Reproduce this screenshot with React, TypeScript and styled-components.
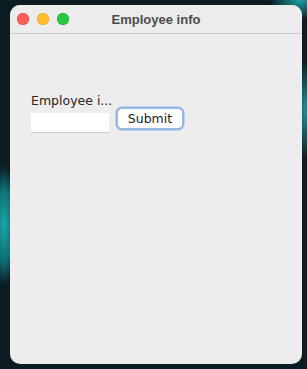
import React from "react";
import styled, { createGlobalStyle } from "styled-components";

const GlobalStyle = createGlobalStyle`
  html, body {
    margin: 0;
    padding: 0;
    width: 307px;
    height: 369px;
    overflow: hidden;
  }
  body {
    background:
      radial-gradient(ellipse 14px 60px at 4px 225px, #1aa7a8 0%, #0d6f76 60%, rgba(10, 30, 36, 0) 100%),
      radial-gradient(ellipse 30px 20px at 300px 0px, #1b9ea3 0%, rgba(10, 30, 36, 0) 100%),
      radial-gradient(ellipse 8px 50px at 305px 110px, #169a9f 0%, rgba(10, 30, 36, 0) 100%),
      #0b1d23;
    font-family: "DejaVu Sans", "Liberation Sans", sans-serif;
  }
`;

const Page = styled.div`
  padding: 5px 5px 5px 10px;
`;

const Window = styled.div`
  width: 292px;
  height: 359px;
  background: #ededed;
  border-radius: 10px;
  display: flex;
  flex-direction: column;
  overflow: hidden;
`;

const TitleBar = styled.div`
  height: 28px;
  flex: none;
  display: flex;
  align-items: center;
  position: relative;
  border-bottom: 1px solid #c9c9c9;
  background: #ececec;
`;

const Lights = styled.div`
  display: flex;
  gap: 8px;
  padding-left: 7px;
`;

const Light = styled.span<{ $color: string; $edge: string }>`
  width: 12px;
  height: 12px;
  border-radius: 50%;
  background: ${(p) => p.$color};
  box-shadow: inset 0 0 0 0.5px ${(p) => p.$edge};
`;

const Title = styled.div`
  position: absolute;
  left: 0;
  right: 0;
  text-align: center;
  font-family: "Liberation Sans", Arial, sans-serif;
  font-weight: bold;
  font-size: 13px;
  color: #4b4b4b;
  pointer-events: none;
`;

const Content = styled.div`
  padding: 59px 21px 0;
  display: flex;
  flex-direction: column;
  align-items: flex-start;
`;

const Label = styled.div`
  font-size: 12.5px;
  color: #262626;
  line-height: 15px;
`;

const Row = styled.div`
  display: flex;
  align-items: flex-start;
  gap: 8px;
  margin-top: 0px;
`;

const Field = styled.input`
  width: 78px;
  height: 20px;
  box-sizing: border-box;
  margin-top: 5px;
  border: none;
  border-bottom: 1px solid #cfcfcf;
  background: #ffffff;
  outline: none;
  padding: 0 4px;
`;

const Button = styled.button`
  height: 21px;
  width: 66px;
  box-sizing: border-box;
  background: #ffffff;
  border: 1px solid #9dbbe0;
  border-radius: 5px;
  box-shadow: 0 0 0 1.5px #8fb5e6;
  font-family: "DejaVu Sans", "Liberation Sans", sans-serif;
  font-size: 12.5px;
  color: #1e1e1e;
  padding: 0;
  cursor: pointer;
`;

export default function App() {
  return (
    <Page>
      <GlobalStyle />
      <Window>
        <TitleBar>
          <Lights>
            <Light $color="#fe5f57" $edge="#e0443e" />
            <Light $color="#febc2e" $edge="#dea123" />
            <Light $color="#28c840" $edge="#1aab29" />
          </Lights>
          <Title>Employee info</Title>
        </TitleBar>
        <Content>
          <Label>Employee i...</Label>
          <Row>
            <Field type="text" />
            <Button type="button">Submit</Button>
          </Row>
        </Content>
      </Window>
    </Page>
  );
}
